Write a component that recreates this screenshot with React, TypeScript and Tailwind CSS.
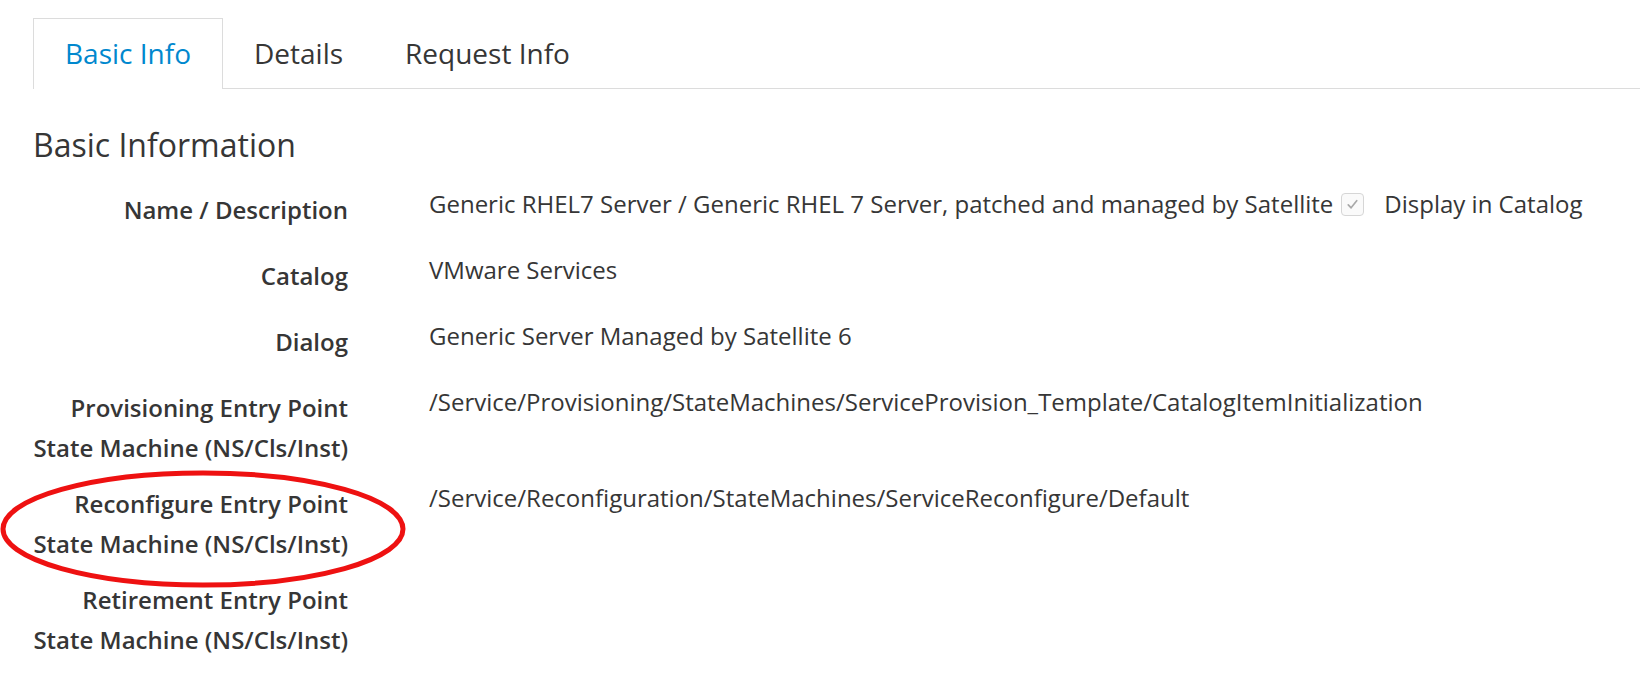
import React from 'react'

const rows: { label: string[]; value: React.ReactNode }[] = [
  {
    label: ['Name / Description'],
    value: (
      <span className="inline-flex items-center">
        Generic RHEL7 Server / Generic RHEL 7 Server, patched and managed by Satellite
        <span className="ml-[8px] mr-[20px] inline-flex h-[23px] w-[23px] items-center justify-center rounded-[4px] border border-[#d6d6d6] bg-[#fafafa]">
          <svg viewBox="0 0 16 16" className="h-[15px] w-[15px]" fill="none" stroke="#a8a8a8" strokeWidth="1.8" strokeLinecap="round" strokeLinejoin="round">
            <path d="M3.5 8.5 L6.5 11.5 L12.5 4" />
          </svg>
        </span>
        Display in Catalog
      </span>
    ),
  },
  { label: ['Catalog'], value: 'VMware Services' },
  { label: ['Dialog'], value: 'Generic Server Managed by Satellite 6' },
  {
    label: ['Provisioning Entry Point', 'State Machine (NS/Cls/Inst)'],
    value: '/Service/Provisioning/StateMachines/ServiceProvision_Template/CatalogItemInitialization',
  },
  {
    label: ['Reconfigure Entry Point', 'State Machine (NS/Cls/Inst)'],
    value: '/Service/Reconfiguration/StateMachines/ServiceReconfigure/Default',
  },
  {
    label: ['Retirement Entry Point', 'State Machine (NS/Cls/Inst)'],
    value: '',
  },
]

export default function App() {
  return (
    <div className="relative h-[694px] w-[1640px] overflow-hidden bg-white text-[#363636] font-['Open_Sans',sans-serif]">
      <div className="pl-[33px] pt-[18px]">
        {/* tabs */}
        <div className="flex border-b border-[#dcdcdc] text-[28px] leading-[40px]">
          <div className="-mb-px border border-b-0 border-[#dcdcdc] bg-white px-[31px] pb-[16px] pt-[14px] text-[#0088ce]">
            Basic Info
          </div>
          <div className="-mb-px border border-b-0 border-transparent px-[30px] pb-[16px] pt-[14px]">Details</div>
          <div className="-mb-px border border-b-0 border-transparent px-[30px] pb-[16px] pt-[14px]">Request Info</div>
        </div>

        <h2 className="mt-[36px] text-[32px] leading-[40px]">Basic Information</h2>

        <div className="mt-[19px] flex flex-col gap-[10px]">
          {rows.map((row, i) => (
            <div key={i} className="flex min-h-[56px]">
              <div className="w-[315px] shrink-0 pt-[6px] text-right text-[24px] font-semibold leading-[40px]">
                {row.label.map((l) => (
                  <div key={l}>{l}</div>
                ))}
              </div>
              <div className="ml-[81px] text-[24px] leading-[40px]">{row.value}</div>
            </div>
          ))}
        </div>
      </div>

      {/* annotation */}
      <svg className="absolute left-0 top-[470px]" width="408" height="120" viewBox="0 0 408 120">
        <ellipse cx="203" cy="59" rx="200" ry="56" fill="none" stroke="#ee1111" strokeWidth="5" />
      </svg>
    </div>
  )
}
